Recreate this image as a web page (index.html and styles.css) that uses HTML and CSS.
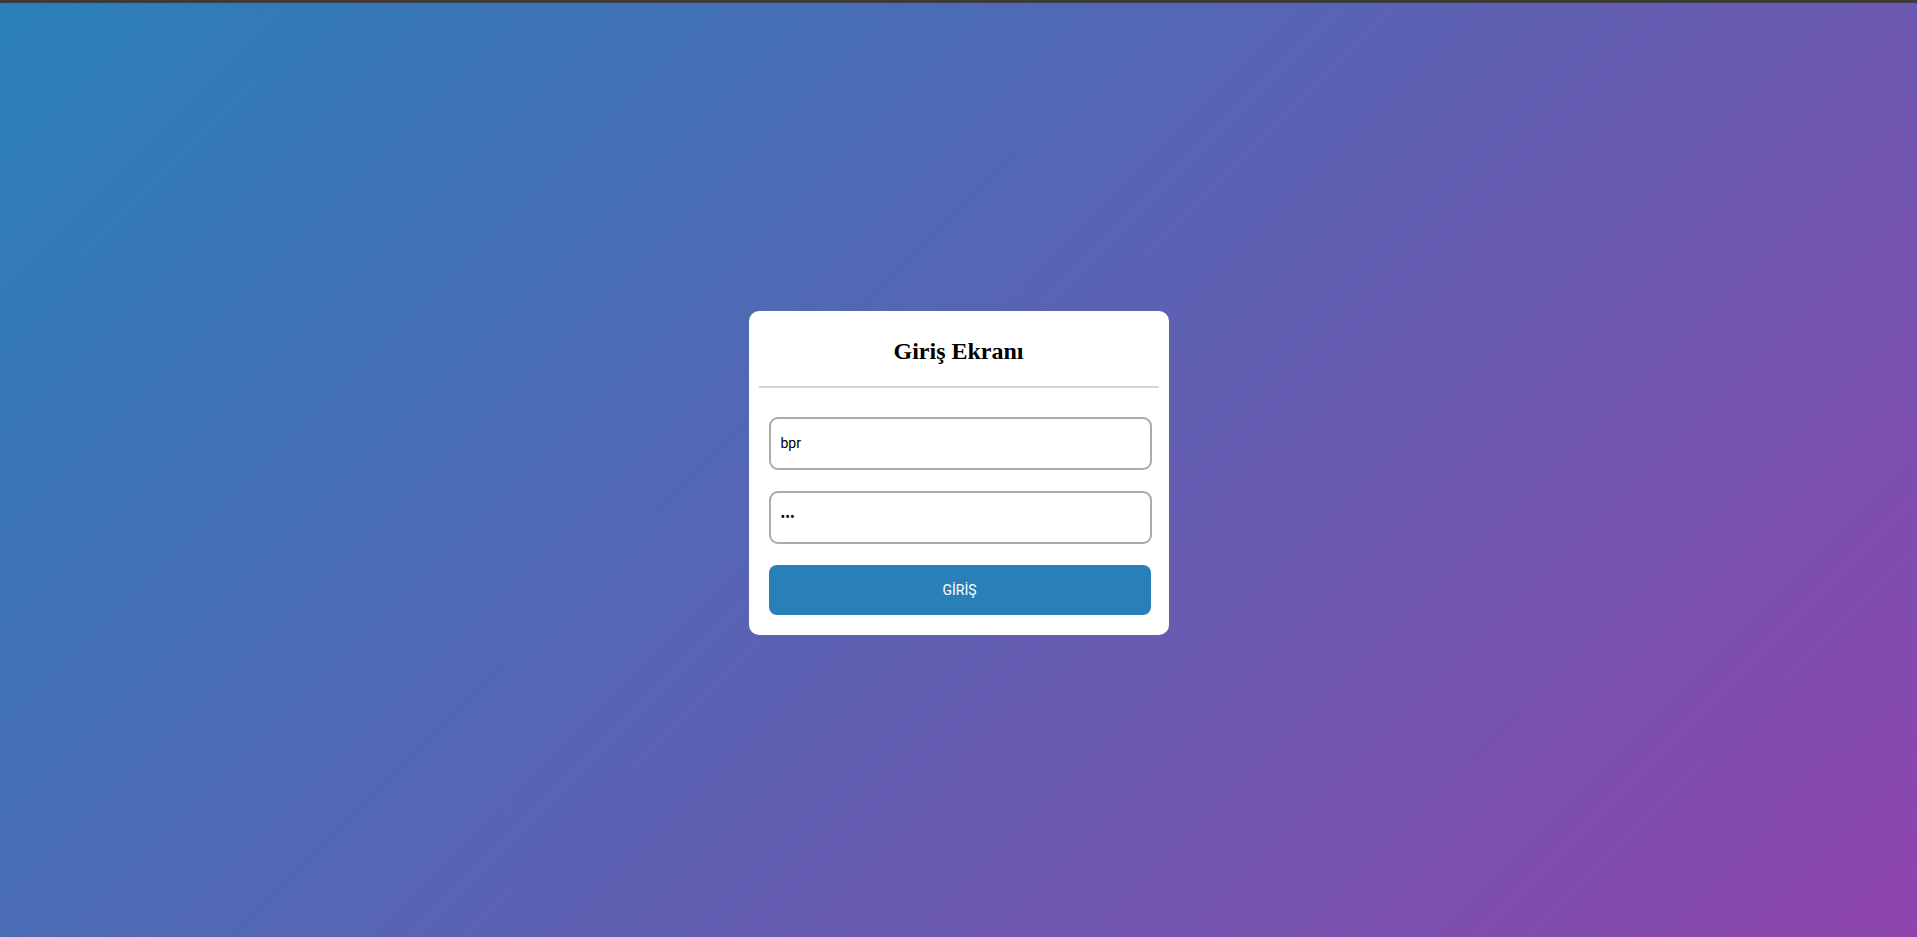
FILE: index.html
```html
<!DOCTYPE html>
<html lang="tr">
<head>
<meta charset="utf-8">
<title>Giriş Ekranı</title>
<link rel="stylesheet" href="styles.css">
</head>
<body>
<div class="topbar"></div>
<main class="stage">
  <div class="card">
    <h2 class="title">Giriş Ekranı</h2>
    <hr class="divider">
    <form class="form">
      <input class="field" type="text" value="bpr">
      <input class="field" type="password" value="123">
      <button class="btn" type="button">GİRİŞ</button>
    </form>
  </div>
</main>
</body>
</html>
```

FILE: styles.css
```css
html, body {
  margin: 0;
  height: 100%;
}
body {
  display: flex;
  flex-direction: column;
  background: linear-gradient(135deg, #2980b9 0%, #8e44ad 100%);
  font-family: Roboto, "Liberation Sans", sans-serif;
}
.topbar {
  height: 3px;
  background: #3c3c3c;
  flex: none;
}
.stage {
  flex: 1;
  display: flex;
  align-items: center;
  justify-content: center;
  padding-top: 5px;
}
.card {
  width: 420px;
  box-sizing: border-box;
  background: #fff;
  border-radius: 10px;
  padding: 20px 20px 20px;
}
.title {
  margin: 0;
  padding-top: 4px;
  text-align: center;
  font-family: "Liberation Serif", serif;
  font-weight: bold;
  font-size: 24px;
  line-height: 32px;
  color: #000;
}
.divider {
  margin: 19px -10px 0;
  border: none;
  border-top: 2px solid #d6d6d6;
}
.form {
  display: flex;
  flex-direction: column;
  gap: 21px;
  padding-top: 29px;
}
.field {
  width: 383px;
  height: 53px;
  box-sizing: border-box;
  border: 2px solid #aaaaaa;
  border-radius: 9px;
  padding: 0 10px;
  font-family: Roboto, "Liberation Sans", sans-serif;
  font-size: 14px;
  color: #000;
  background: #fff;
  outline: none;
}
.btn {
  width: 382px;
  height: 50px;
  border: none;
  border-radius: 8px;
  background: #2980b9;
  color: #fff;
  font-family: Roboto, "Liberation Sans", sans-serif;
  font-size: 14px;
  cursor: pointer;
}
```
